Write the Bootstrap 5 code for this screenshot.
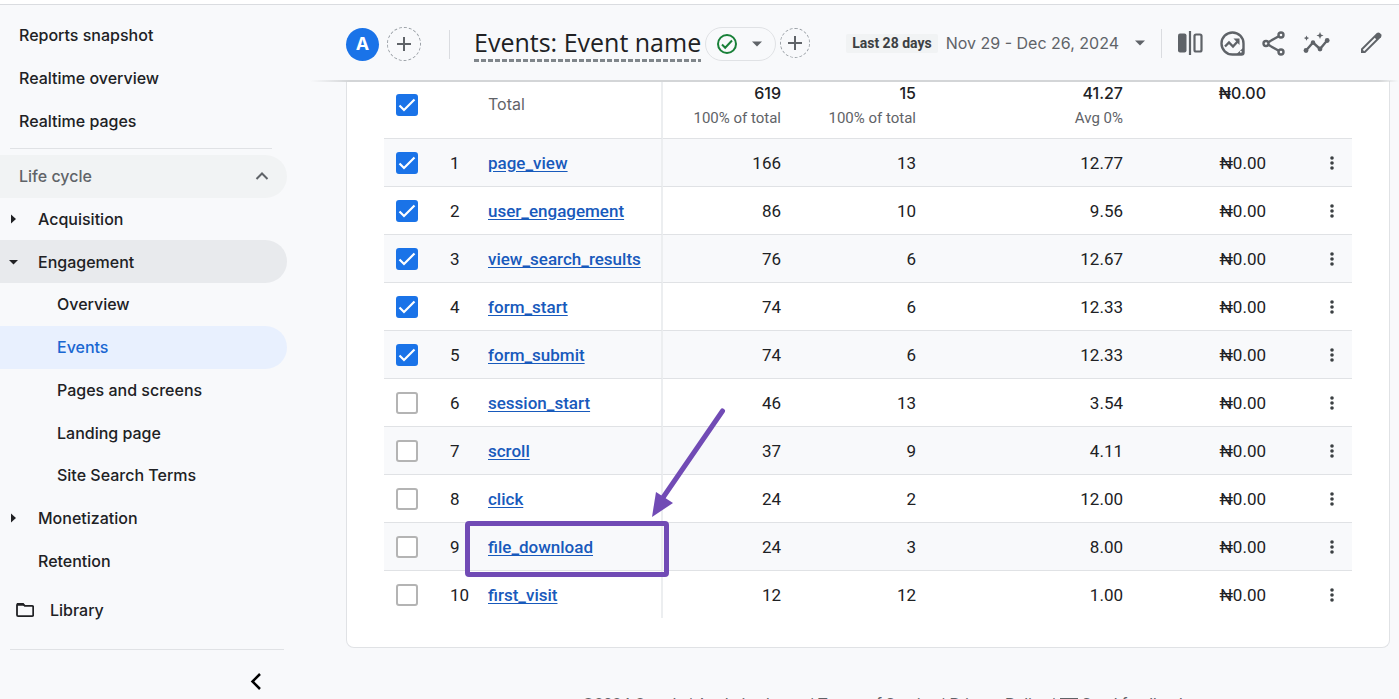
<!DOCTYPE html>
<html lang="en">
<head>
<meta charset="utf-8">
<meta name="viewport" content="width=device-width, initial-scale=1">
<title>Analytics – Events: Event name</title>
<link href="https://cdn.jsdelivr.net/npm/bootstrap@5.3.0/dist/css/bootstrap.min.css" rel="stylesheet">
<style>
  :root { --ink: #202124; --muted: #5f6368; --line: #e0e2e5; --blue: #1a73e8; --page: #f8f9fb; }
  body { font-family: Inter, "Liberation Sans", sans-serif; font-size: 16px; line-height: 24px; color: var(--ink); background: var(--page); border-top: 4px solid #fff; }
  .app { height: calc(100vh - 4px); border-top: 1px solid #dadce0; overflow: hidden; }

  .side { width: 310px; font-weight: 500; padding-top: 9px; }
  .side-link { display: flex; align-items: center; flex: 1 1 0; width: 287px; padding-left: 19px; color: var(--ink); text-decoration: none; border-radius: 0 22px 22px 0; }
  .side-main { height: 128px; }
  .side-tree { height: 427px; }
  .side-rule { height: 1px; background: var(--line); }
  .side-rule.upper { margin: 6px 38px 6px 10px; }
  .side-rule.lower { margin: 19px 26px 0 10px; }
  .side-head { width: 287px; flex: 1 1 0; padding: 0 17px 0 19px; color: var(--muted); background: #f1f3f4; border: 0; font-weight: 500; border-radius: 0 22px 22px 0; }
  .side-link.lvl1 { padding-left: 9px; }
  .side-link.lvl2 { padding-left: 57px; }
  .side-link.library { padding-left: 16px; }
  .side-link.open { background: #e8eaed; }
  .side-link.active { background: #e8f0fe; color: #1967d2; }
  .twist { width: 10px; height: 10px; margin-right: 19px; }
  .side-foot { padding-right: 44px; }

  .plain { background: none; border: 0; padding: 0; display: flex; align-items: center; justify-content: center; color: var(--muted); }
  .bar { height: 76px; padding: 0 16px 0 36px; position: relative; z-index: 2; background: var(--page); }
  .bar::after { content: ""; position: absolute; left: 0; right: 0; top: 100%; height: 2px; margin-top: -1px; background: linear-gradient(90deg, transparent, #d3d5d7 40px, #d3d5d7 calc(100% - 20px), transparent); }
  .bar-title { padding-top: 2px; }
  .avatar { width: 33px; height: 33px; background: var(--blue); color: #fff; font-weight: 700; font-size: 18px; }
  .add { border: 1px dashed #9aa0a6; border-radius: 50%; width: 34px; height: 34px; }
  .add.sm { width: 30px; height: 30px; }
  .vr-line { width: 1px; height: 29px; background: #dadce0; }
  .report-name { font: 400 25px/30px "Open Sans", sans-serif; margin: 0; padding: 0 0 2px; white-space: nowrap; }
  .dashes { height: 3px; background: repeating-linear-gradient(90deg, #80868b 0 5px, transparent 5px 7px); }
  .chip { width: 71px; height: 34px; gap: 14px; padding-right: 4px; border: 1px solid var(--line); border-radius: 17px; }
  .period { font: 700 14px/19px Roboto, sans-serif; color: #3c4043; background: #f1f3f4; padding: 0 6px; border-radius: 2px; }
  .dates { color: var(--muted); white-space: nowrap; }
  .tools { gap: 17px; }

  .report { margin: 0 9px 0 36px; padding: 0 37px 29px; border: 1px solid var(--line); border-top: 0; border-radius: 0 0 8px 8px; background: #fff; }
  .events { width: 100%; table-layout: fixed; border-collapse: separate; border-spacing: 0; font: 400 17px/24px Roboto, sans-serif; }
  .events td { height: 48px; padding: 0 10px 0 0; text-align: right; border-top: 1px solid var(--line); }
  .events tr:nth-child(even) td { background: var(--page); }
  .events tr:first-child td { height: 57px; border-top: 0; font: 500 16px/24px Inter, sans-serif; vertical-align: top; }
  .events tr:first-child td:nth-child(-n+3) { vertical-align: middle; padding-bottom: 12px; }
  .events .pick, .events .num { text-align: left; }
  .events .pick { padding: 0 0 0 12px; line-height: 1; }
  .events .num { padding: 0 0 0 20px; }
  .events .name { position: relative; padding: 0 0 0 10px; text-align: left; border-right: 2px solid #eceef0; }
  .events .name a { color: #185abc; font-weight: 500; text-underline-offset: 2px; }
  .events tr:first-child .name { color: var(--muted); font-weight: 400; }
  .sub { display: block; font: 400 15px/26px Roboto, sans-serif; color: var(--muted); }
  .pick .form-check-input { width: 22px; height: 22px; margin: 0; border: 2px solid #b4b4b4; border-radius: 3px; background-color: #fff; box-shadow: none; vertical-align: middle; }
  .pick .form-check-input:checked { background-color: var(--blue); border-color: var(--blue); background-image: url("data:image/svg+xml,%3csvg xmlns='http://www.w3.org/2000/svg' viewBox='0 0 18 18'%3e%3cpath fill='none' stroke='%23fff' stroke-width='2.2' d='M1.5 9.5l4.5 4.5L16.5 3.5'/%3e%3c/svg%3e"); }
  .more { width: 20px; height: 24px; margin-left: auto; color: #3c4043; }
  .callout-box { position: absolute; z-index: 1; left: -13px; top: -2px; width: 204px; height: 56px; border: 5px solid #714bb5; border-radius: 4px; pointer-events: none; }
  .callout-arrow { position: absolute; z-index: 1; left: 170px; bottom: 52px; pointer-events: none; }
  .legal { font: 400 16px/20px Roboto, sans-serif; color: var(--muted); padding: 47px 0 0 60px; white-space: nowrap; }
</style>
</head>
<body>
<div class="app d-flex">
  <nav class="side flex-shrink-0" aria-label="Reports">
    <div class="side-main d-flex flex-column">
      <a class="side-link" href="#">Reports snapshot</a>
      <a class="side-link" href="#">Realtime overview</a>
      <a class="side-link" href="#">Realtime pages</a>
    </div>
    <div class="side-rule upper"></div>
    <div class="side-tree d-flex flex-column">
      <button class="side-head d-flex align-items-center justify-content-between" type="button">Life cycle
        <svg width="16" height="16" viewBox="0 0 16 16" fill="none" stroke="currentColor" stroke-width="2"><path d="M2.500 11 8 5.500 13.500 11"/></svg></button>
      <a class="side-link lvl1" href="#"><svg class="twist" viewBox="0 0 10 10"><path d="M2 .5v9L7 5z" fill="currentColor"/></svg>Acquisition</a>
      <a class="side-link lvl1 open" href="#"><svg class="twist" viewBox="0 0 10 10"><path d="M0 3h9L4.500 7.500z" fill="currentColor"/></svg>Engagement</a>
      <a class="side-link lvl2" href="#">Overview</a>
      <a class="side-link lvl2 active" href="#" aria-current="page">Events</a>
      <a class="side-link lvl2" href="#">Pages and screens</a>
      <a class="side-link lvl2" href="#">Landing page</a>
      <a class="side-link lvl2" href="#">Site Search Terms</a>
      <a class="side-link lvl1" href="#"><svg class="twist" viewBox="0 0 10 10"><path d="M2 .5v9L7 5z" fill="currentColor"/></svg>Monetization</a>
      <a class="side-link lvl1" href="#"><span class="twist"></span>Retention</a>
    </div>
    <a class="side-link library py-2 mt-2 mb-3" href="#"><svg class="me-3" width="18" height="16" viewBox="0 0 18 16"><path d="M1 13V3q0-1.200 1.200-1.200H7l1.800 2H16q1.200 0 1.200 1.200v8q0 1.200-1.200 1.200H2.200Q1 14.200 1 13z" fill="none" stroke="currentColor" stroke-width="1.800"/><path d="M1 1h6l2 2.800H1z" fill="currentColor"/></svg>Library</a>
    <div class="side-rule lower"></div>
    <div class="side-foot d-flex justify-content-end mt-3 pt-1">
      <button class="plain text-black" type="button" aria-label="Collapse menu"><svg width="20" height="22" viewBox="0 0 20 22" fill="none" stroke="currentColor" stroke-width="2.500"><path d="M14 4 6.500 11.500 14 19"/></svg></button>
    </div>
  </nav>

  <main class="flex-grow-1" style="min-width:0">
    <header class="bar d-flex align-items-center">
      <div class="bar-title d-flex align-items-center">
        <span class="avatar rounded-circle d-flex align-items-center justify-content-center">A</span>
        <button class="plain add ms-2 me-4" type="button" aria-label="Add comparison"><svg width="16" height="16" viewBox="0 0 16 16" stroke="currentColor" stroke-width="2"><path d="M8 1v14M1 8h14"/></svg></button>
        <span class="vr-line ms-1 me-4"></span>
        <div><h1 class="report-name">Events: Event name</h1><div class="dashes"></div></div>
        <button class="plain chip ms-1" type="button" aria-label="Data quality">
          <svg width="22" height="22" viewBox="0 0 22 22" fill="none" stroke="#188038" stroke-width="2"><circle cx="11" cy="11" r="9"/><path d="m6 11.500 3.200 3.200L16 7.500"/></svg>
          <svg width="10" height="6" viewBox="0 0 10 6"><path d="M0 .5h10L5 5.500z" fill="currentColor"/></svg></button>
      </div>
      <button class="plain add sm ms-1" type="button" aria-label="Add filter"><svg width="16" height="16" viewBox="0 0 16 16" stroke="currentColor" stroke-width="2"><path d="M8 1v14M1 8h14"/></svg></button>
      <button class="plain ms-auto gap-2" type="button"><span class="period">Last 28 days</span><span class="dates">Nov 29 - Dec 26, 2024</span><svg class="ms-2" width="10" height="6" viewBox="0 0 10 6"><path d="M0 .5h10L5 5.500z" fill="currentColor"/></svg></button>
      <span class="vr-line ms-3"></span>
      <div class="tools d-flex align-items-center ms-3">
        <button class="plain" type="button" aria-label="Compare"><svg width="25" height="24" viewBox="0 0 25 24"><rect x="0" y="2.500" width="8.500" height="19" rx="2" fill="currentColor"/><path d="M12 0v24" stroke="currentColor" stroke-width="2.200"/><rect x="16.500" y="3.500" width="7" height="17" rx="1.500" fill="none" stroke="currentColor" stroke-width="2.200"/></svg></button>
        <button class="plain" type="button" aria-label="Insights"><svg width="25" height="25" viewBox="0 0 25 25" fill="none" stroke="currentColor" stroke-width="2.400"><path d="M12.500 23.500a11 11 0 1 1 11-11v9q0 2-2 2z"/><path d="m5 15.500 4-4 4 4 5.500-6"/><path d="M13.500 7.500h6V14z" fill="currentColor" stroke="none"/><path d="M24 16v7.500h-8z" fill="currentColor" stroke="none"/><circle cx="20.800" cy="20.800" r="1" fill="#f8f9fb" stroke="none"/></svg></button>
        <button class="plain" type="button" aria-label="Share"><svg width="24" height="25" viewBox="0 0 24 25" fill="none" stroke="currentColor" stroke-width="2.400"><circle cx="4" cy="12.500" r="2.500"/><circle cx="19" cy="4" r="2.500"/><circle cx="19" cy="21" r="2.500"/><path d="m6.300 11.200 10.500-5.900M6.300 13.800l10.500 5.900"/></svg></button>
        <button class="plain" type="button" aria-label="Explore"><svg width="27" height="22" viewBox="0 0 27 22"><path d="m3 18.500 7-8 7 6.500 7.500-9" fill="none" stroke="currentColor" stroke-width="2.400"/><g fill="currentColor"><circle cx="3" cy="18.500" r="2.400"/><circle cx="10" cy="10.500" r="2.200"/><circle cx="17" cy="17" r="2.400"/><circle cx="24.200" cy="8.500" r="2.400"/><path d="m17 0 1 2.500 2.500 1-2.500 1L17 7l-1-2.500-2.500-1 2.500-1zM3.500 3.500l.8 1.800 1.800.8-1.800.8-.8 1.800-.8-1.800L.9 6.100l1.800-.8z"/></g></svg></button>
        <button class="plain ms-2 ps-1" type="button" aria-label="Edit"><svg width="24" height="24" viewBox="0 0 24 24"><path d="M2 22v-4.200L17.800 2q1.500-1.200 3 0l1.200 1.200q1.200 1.500 0 3L6.200 22z" fill="currentColor"/><path d="M4.500 19.500 16.500 7.500" stroke="#f8f9fb" stroke-width="2"/></svg></button>
      </div>
    </header>

    <section class="report">
      <table class="events">
        <colgroup><col style="width:46px"><col style="width:48px"><col style="width:185px"><col style="width:128px"><col style="width:135px"><col><col style="width:143px"><col style="width:76px"></colgroup>
        <tbody id="rows">
          <tr>
            <td class="pick"><input class="form-check-input" type="checkbox" checked aria-label="Plot total"></td>
            <td class="num"></td><td class="name">Total</td>
            <td>619<span class="sub">100% of total</span></td><td>15<span class="sub">100% of total</span></td>
            <td>41.27<span class="sub">Avg 0%</span></td><td>₦0.00</td><td></td>
          </tr>
        </tbody>
      </table>
    </section>
    <footer class="legal text-center">©2024 Google | <a class="text-reset text-decoration-none" href="#">Analytics home</a> | <a class="text-reset text-decoration-none" href="#">Terms of Service</a> | <a class="text-reset text-decoration-none" href="#">Privacy Policy</a> | <svg width="18" height="16" viewBox="0 0 18 16" fill="none" stroke="currentColor" stroke-width="2"><path d="M1 1h16v10H5l-4 4z"/></svg> <a class="text-reset text-decoration-none" href="#">Send feedback</a></footer>
  </main>
</div>
<script src="https://cdn.jsdelivr.net/npm/bootstrap@5.3.0/dist/js/bootstrap.bundle.min.js"></script>
<script>
  const events = [
    ["page_view", 166, 13, "12.77"], ["user_engagement", 86, 10, "9.56"], ["view_search_results", 76, 6, "12.67"],
    ["form_start", 74, 6, "12.33"], ["form_submit", 74, 6, "12.33"], ["session_start", 46, 13, "3.54"],
    ["scroll", 37, 9, "4.11"], ["click", 24, 2, "12.00"], ["file_download", 24, 3, "8.00"], ["first_visit", 12, 12, "1.00"]
  ];
  const callout = `<span class="callout-box"></span><svg class="callout-arrow" width="80" height="112" viewBox="0 0 80 112"><path d="M74.500 5 14 93" stroke="#714bb5" stroke-width="5" stroke-linecap="round"/><path d="M4 111 8 86l17 11z" fill="#714bb5"/></svg>`;
  document.getElementById("rows").insertAdjacentHTML("beforeend", events.map(([name, count, users, per], i) => `
    <tr>
      <td class="pick"><input class="form-check-input" type="checkbox" ${i < 5 ? "checked" : ""} aria-label="Plot ${name}"></td>
      <td class="num">${i + 1}</td>
      <td class="name"><a href="#">${name}</a>${name === "file_download" ? callout : ""}</td>
      <td>${count}</td><td>${users}</td><td>${per}</td><td>₦0.00</td>
      <td><button class="plain more" type="button" aria-label="Options for ${name}"><svg width="4" height="16" viewBox="0 0 4 16" fill="currentColor"><circle cx="2" cy="3" r="1.800"/><circle cx="2" cy="8" r="1.800"/><circle cx="2" cy="13" r="1.800"/></svg></button></td>
    </tr>`).join(""));
</script>
</body>
</html>
